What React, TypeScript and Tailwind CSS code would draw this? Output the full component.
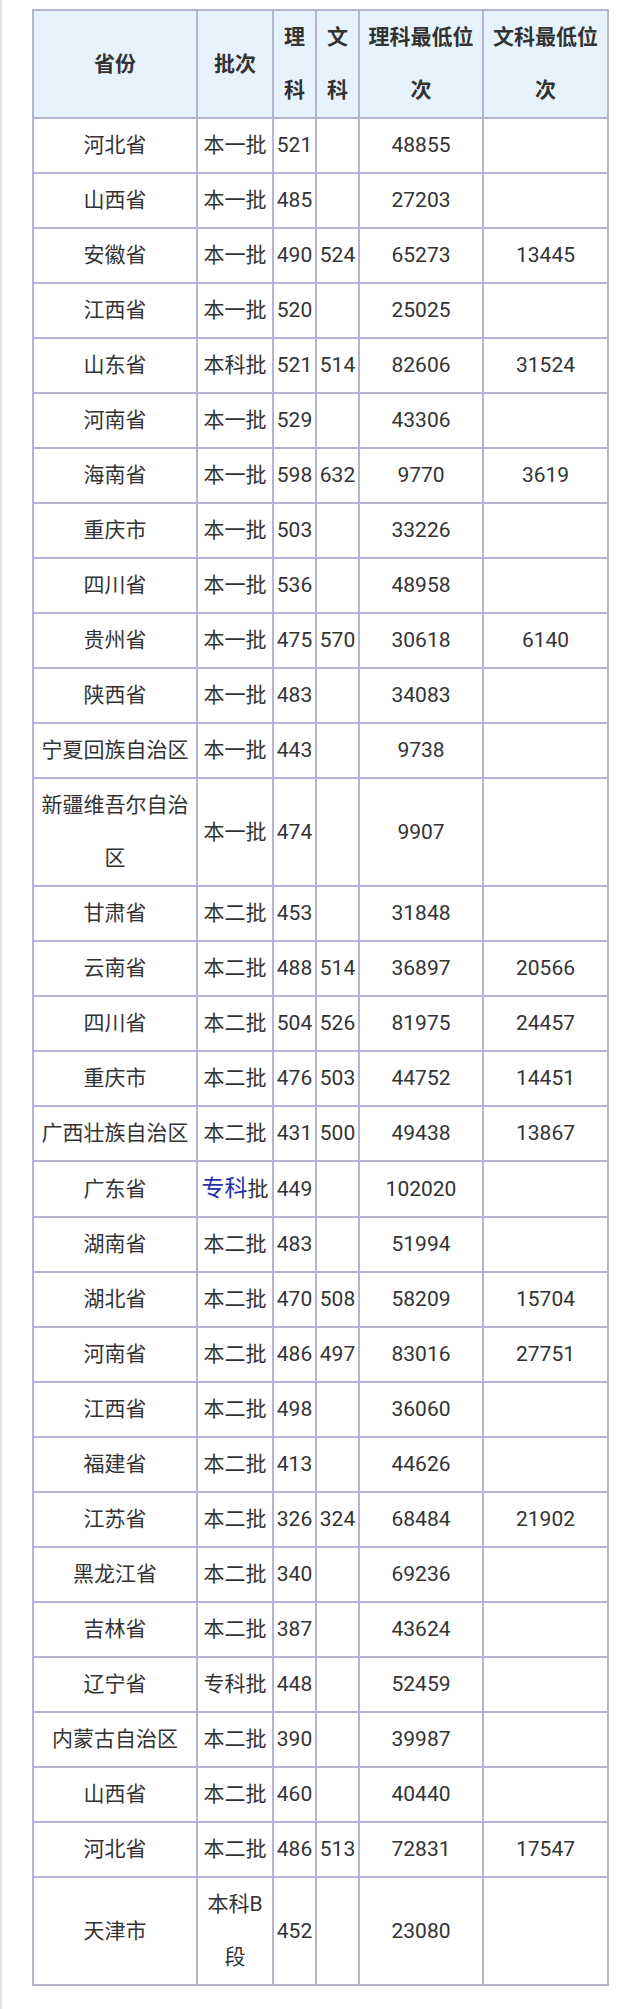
type Row = {
  prov: string;
  batch: React.ReactNode;
  li: string;
  wen?: string;
  liRank: string;
  wenRank?: string;
};

const rows: Row[] = [
  { prov: "河北省", batch: "本一批", li: "521", liRank: "48855" },
  { prov: "山西省", batch: "本一批", li: "485", liRank: "27203" },
  { prov: "安徽省", batch: "本一批", li: "490", wen: "524", liRank: "65273", wenRank: "13445" },
  { prov: "江西省", batch: "本一批", li: "520", liRank: "25025" },
  { prov: "山东省", batch: "本科批", li: "521", wen: "514", liRank: "82606", wenRank: "31524" },
  { prov: "河南省", batch: "本一批", li: "529", liRank: "43306" },
  { prov: "海南省", batch: "本一批", li: "598", wen: "632", liRank: "9770", wenRank: "3619" },
  { prov: "重庆市", batch: "本一批", li: "503", liRank: "33226" },
  { prov: "四川省", batch: "本一批", li: "536", liRank: "48958" },
  { prov: "贵州省", batch: "本一批", li: "475", wen: "570", liRank: "30618", wenRank: "6140" },
  { prov: "陕西省", batch: "本一批", li: "483", liRank: "34083" },
  { prov: "宁夏回族自治区", batch: "本一批", li: "443", liRank: "9738" },
  { prov: "新疆维吾尔自治区", batch: "本一批", li: "474", liRank: "9907" },
  { prov: "甘肃省", batch: "本二批", li: "453", liRank: "31848" },
  { prov: "云南省", batch: "本二批", li: "488", wen: "514", liRank: "36897", wenRank: "20566" },
  { prov: "四川省", batch: "本二批", li: "504", wen: "526", liRank: "81975", wenRank: "24457" },
  { prov: "重庆市", batch: "本二批", li: "476", wen: "503", liRank: "44752", wenRank: "14451" },
  { prov: "广西壮族自治区", batch: "本二批", li: "431", wen: "500", liRank: "49438", wenRank: "13867" },
  {
    prov: "广东省",
    batch: (
      <>
        <span className="text-[23px] text-[#2331ad]">专科</span>批
      </>
    ),
    li: "449",
    liRank: "102020",
  },
  { prov: "湖南省", batch: "本二批", li: "483", liRank: "51994" },
  { prov: "湖北省", batch: "本二批", li: "470", wen: "508", liRank: "58209", wenRank: "15704" },
  { prov: "河南省", batch: "本二批", li: "486", wen: "497", liRank: "83016", wenRank: "27751" },
  { prov: "江西省", batch: "本二批", li: "498", liRank: "36060" },
  { prov: "福建省", batch: "本二批", li: "413", liRank: "44626" },
  { prov: "江苏省", batch: "本二批", li: "326", wen: "324", liRank: "68484", wenRank: "21902" },
  { prov: "黑龙江省", batch: "本二批", li: "340", liRank: "69236" },
  { prov: "吉林省", batch: "本二批", li: "387", liRank: "43624" },
  { prov: "辽宁省", batch: "专科批", li: "448", liRank: "52459" },
  { prov: "内蒙古自治区", batch: "本二批", li: "390", liRank: "39987" },
  { prov: "山西省", batch: "本二批", li: "460", liRank: "40440" },
  { prov: "河北省", batch: "本二批", li: "486", wen: "513", liRank: "72831", wenRank: "17547" },
  { prov: "天津市", batch: "本科B段", li: "452", liRank: "23080" },
];

const cell = "border-2 border-[#b4b3d4] px-[3px] py-0 text-center align-middle leading-[53px]";
const numCell = "border-2 border-[#b4b3d4] px-0 py-0 text-center align-middle leading-[53px] whitespace-nowrap";

export default function App() {
  return (
    <div
      className="min-h-[2009px] bg-white border-l-2 border-[#e6e6e6] pl-[30px] pt-[9px] text-[21px] text-[#333333]"
      style={{ fontFamily: "Roboto, 'Noto Sans CJK SC', sans-serif" }}
    >
      <table className="table-fixed border-collapse w-[575px]">
        <colgroup>
          <col className="w-[164px]" />
          <col className="w-[76px]" />
          <col className="w-[43px]" />
          <col className="w-[43px]" />
          <col className="w-[124px]" />
          <col className="w-[125px]" />
        </colgroup>
        <thead>
          <tr className="bg-[#e7f3fc] font-bold">
            <th className={cell}>省份</th>
            <th className={cell}>批次</th>
            <th className={cell}>理科</th>
            <th className={cell}>文科</th>
            <th className={cell}>理科最低位次</th>
            <th className={cell}>文科最低位次</th>
          </tr>
        </thead>
        <tbody>
          {rows.map((r, i) => (
            <tr key={i}>
              <td className={cell}>{r.prov}</td>
              <td className={cell}>{r.batch}</td>
              <td className={numCell}>{r.li}</td>
              <td className={numCell}>{r.wen ?? ""}</td>
              <td className={numCell}>{r.liRank}</td>
              <td className={numCell}>{r.wenRank ?? ""}</td>
            </tr>
          ))}
        </tbody>
      </table>
    </div>
  );
}
